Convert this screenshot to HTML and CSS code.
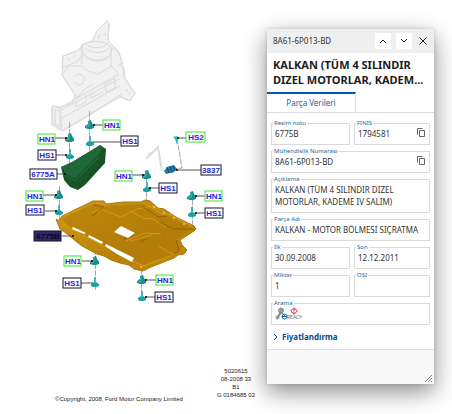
FILE: index.html
```html
<!DOCTYPE html>
<html lang="tr">
<head>
    <meta charset="utf-8">
    <meta name="viewport" content="width=device-width, initial-scale=1">
    <title>KALKAN - MOTOR BÖLMESI SIÇRATMA</title>
    <link rel="stylesheet" href="styles.css">
</head>
<body>
    <main class="viewer">
        <figure class="drawing">
            <svg class="diagram" viewBox="0 0 259 360" role="img" aria-label="6775B">
                <defs>
                    <g id="nut">
                        <path d="M-2 -4L1 -5L2 -2L4 1V3L1 4H-2L-5 3V1L-2 -1Z" fill="#168f8c"/>
                        <path d="M-1 -4V1L-4 2" fill="none" stroke="#4bb8b5"/>
                    </g>
                    <g id="screw">
                        <path d="M-1 -6H1V-1L4 1V3L1 4H-2L-4 3V1L-1 -1Z" fill="#1ba3a1"/>
                        <path d="M0 -6V0" stroke="#66cac7"/>
                    </g>
                    <linearGradient id="gold" x1="0" y1="0" x2="1" y2="1">
                        <stop offset="0" stop-color="#d39a12"/>
                        <stop offset=".6" stop-color="#b98209"/>
                        <stop offset="1" stop-color="#c0880a"/>
                    </linearGradient>
                </defs>

                <!-- engine mount -->
                <g class="mount">
                    <path d="M92 41L97 31L107 21L109 24L108 40L112 45L118 50L123 65L124 78L135 93L130 101L120 97L63 131L52 123V106L60 107L72 103L75 95L62 75L63 56L77 51L83 44Z" fill="#f1f1f2"/>
                    <path d="M92 41L97 31L107 21L109 24L108 40M98 39L100 34M104 36L106 33M82 46C87 40 104 40 110 46C114 52 109 59 98 60C88 61 80 53 82 46V64M111 49V66L118 73M85 48C91 54 103 54 109 48M84 55C91 63 104 63 111 55M86 44C91 49 102 49 107 44M63 56L81 49M63 56L62 68L78 61L82 55M68 58L70 61M74 54V58M62 75L69 66L82 66L88 71L98 74L112 66M62 75L77 98L85 89L93 84M75 76C78 72 85 75 84 80C83 85 77 87 75 82M112 48L119 52L122 63L117 66M119 64L124 68L125 78L135 93L130 101L120 96"/>
                    <path d="M52 106L60 108L119 74M60 108L62 131L122 94M52 106V125L62 131M55 109L60 112V127L55 124ZM61 110L119 79M62 118L120 86M76 101V107L86 102V95M91 93V98L103 92M105 84L115 78V88L106 92ZM126 89L130 94"/>
                </g>

                <!-- assembly guide lines -->
                <path class="guide" d="M69.500 122V163M89.500 111V151M59.500 186V221M146.500 170V203M192.500 192V228M95.500 249V290M141.500 268V301M177 138L182 168L173 169"/>
                <path d="M146 159L158 147L162 171M146 159L151 152" fill="none" stroke="#dcdcdc" stroke-width="2"/>

                <!-- side shield -->
                <path d="M61 167L72 162L100 145L106 149L105 163L85 185L78 190L70 187L64 180Z" fill="#185526"/>
                <path d="M61 167L72 163L99 146L102 148L98 159L75 181L66 177L64 170Z" fill="#20683a"/>
                <path d="M66 175L75 179L101 153M78 188L104 161" fill="none" stroke="#144a23"/>

                <!-- undertray -->
                <path d="M56 219L59 221L62 216L93 201L104 201L106 204L123 202L141 202L145 200L150 201L158 208L164 209L176 217L194 226L196 229L194 231L180 240L182 245L187 250L184 254L178 255L174 258L151 267L143 271L134 269L129 265L120 263L111 260L104 256L97 254L82 246L73 239L66 233L60 229Z" fill="url(#gold)" stroke="#a87608"/>
                <path d="M62 219L94 203L106 206L143 204L192 229L177 239L181 251L143 265L116 253L68 226Z" fill="#ad7808" opacity=".55"/>
                <g fill="none" stroke="#d29a1c">
                    <path d="M61 221L66 226L119 254L143 266L171 256M63 216L94 203L105 205L98 213M92 213L101 209L121 217L137 209L153 206L192 226M145 203L161 214L170 214L186 224M130 211L145 219L151 218L166 227M126 241L145 233L161 234M131 241L152 235M158 246L174 255"/>
                </g>
                <g fill="none" stroke="#916309">
                    <path d="M94 205L104 207L92 216M142 206L158 217L167 216M159 222L174 229L194 229M176 240L179 250L174 254M140 242L148 238M124 239L135 234"/>
                </g>
                <path d="M114 232L121 226L135 233L128 238Z" fill="#fff"/>
                <path d="M73 227L86 233L84 234L72 229ZM89 235L103 242L102 244L88 237ZM106 244L118 250L134 258L132 262L117 254L105 246Z" fill="#fff"/>
                <g fill="#edc95f">
                    <circle cx="154" cy="207" r="1"/>
                    <circle cx="164" cy="213" r="1"/>
                    <circle cx="174" cy="218" r="1"/>
                    <circle cx="184" cy="224" r="1"/>
                    <circle cx="141" cy="267" r="1"/>
                </g>

                <use href="#nut" x="90" y="125"/>
                <use href="#nut" x="70" y="138"/>
                <use href="#nut" x="59" y="195"/>
                <use href="#nut" x="147" y="175"/>
                <use href="#nut" x="192" y="196"/>
                <use href="#nut" x="95" y="261"/>
                <use href="#nut" x="142" y="280"/>
                <use href="#screw" x="90" y="142"/>
                <use href="#screw" x="70" y="155"/>
                <use href="#screw" x="59" y="211"/>
                <use href="#screw" x="147" y="188"/>
                <use href="#screw" x="192" y="213"/>
                <use href="#screw" x="95" y="283"/>
                <use href="#screw" x="142" y="297"/>
                <path d="M173 137L177 136L178 138L177 145L175 139Z" fill="#1fbfc1"/>
                <path d="M164 171L167 167L174 165L177 169L174 172L166 174Z" fill="#237ba7"/>
                <path d="M167 167L169 173M170 166L172 173M173 166L175 171" stroke="#124866"/>

                <path class="leader" d="M93 125H103M55 138H67M42 195H57M132 175H145M195 196H205M82 261H93M145 280H156M178 138H186M92 142H121M56 155H67M57 174H65M45 211H57M62 236H73M149 188H159M177 170H201M195 213H205M81 283H93M145 297H155"/>
                <g>
                    <circle cx="94" cy="125" r="1"/><circle cx="66" cy="138" r="1"/>
                    <circle cx="56" cy="195" r="1"/><circle cx="143" cy="175" r="1"/>
                    <circle cx="196" cy="196" r="1"/><circle cx="92" cy="261" r="1"/>
                    <circle cx="146" cy="280" r="1"/><circle cx="178" cy="138" r="1"/>
                    <circle cx="66" cy="155" r="1"/><circle cx="65" cy="174" r="1"/>
                    <circle cx="56" cy="211" r="1"/><circle cx="73" cy="236" r="1"/>
                    <circle cx="150" cy="188" r="1"/><circle cx="177" cy="170" r="1"/>
                    <circle cx="196" cy="213" r="1"/><circle cx="146" cy="297" r="1"/>
                </g>

                <!-- callouts -->
                <g class="nut-tags">
                    <rect x="103" y="120" width="17" height="10"/>
                    <rect x="38" y="134" width="17" height="10"/>
                    <rect x="26" y="191" width="17" height="10"/>
                    <rect x="115" y="171" width="17" height="10"/>
                    <rect x="205" y="191" width="17" height="10"/>
                    <rect x="64" y="256" width="17" height="10"/>
                    <rect x="156" y="275" width="17" height="10"/>
                    <rect x="186" y="132" width="19" height="10"/>
                </g>
                <g class="part-tags">
                    <rect x="121" y="136" width="17" height="10"/>
                    <rect x="38" y="150" width="18" height="10"/>
                    <rect x="30" y="169" width="27" height="10"/>
                    <rect x="26" y="205" width="18" height="10"/>
                    <rect class="selected" x="34" y="231" width="27" height="10"/>
                    <rect x="159" y="183" width="18" height="10"/>
                    <rect x="201" y="165" width="20" height="10"/>
                    <rect x="205" y="208" width="18" height="10"/>
                    <rect x="63" y="278" width="18" height="10"/>
                    <rect x="155" y="292" width="18" height="10"/>
                </g>
                <g class="tag-text">
                    <text x="112" y="128">HN1</text>
                    <text x="47" y="142">HN1</text>
                    <text x="35" y="199">HN1</text>
                    <text x="124" y="179">HN1</text>
                    <text x="214" y="199">HN1</text>
                    <text x="73" y="264">HN1</text>
                    <text x="165" y="283">HN1</text>
                    <text x="196" y="140">HS2</text>
                    <text x="130" y="144">HS1</text>
                    <text x="47" y="158">HS1</text>
                    <text x="43" y="177">6775A</text>
                    <text x="35" y="213">HS1</text>
                    <text class="selected" x="48" y="239">6775B</text>
                    <text x="168" y="191">HS1</text>
                    <text x="211" y="173">3837</text>
                    <text x="214" y="216">HS1</text>
                    <text x="72" y="286">HS1</text>
                    <text x="164" y="300">HS1</text>
                </g>
            </svg>
            <figcaption class="caption">
                <span class="copyright">©Copyright, 2008, Ford Motor Company Limited</span>
                <span class="codes">5020615<br>08-2008 33<br>B1<br>G 0184685 02</span>
            </figcaption>
        </figure>

        <aside class="panel">
            <header class="panel-bar">
                <span class="part-number">8A61-6P013-BD</span>
                <button class="step" type="button" aria-label="Önceki">
                    <svg width="8" height="8" viewBox="0 0 8 8"><path d="M1 6L4 3L7 6"/></svg>
                </button>
                <button class="step" type="button" aria-label="Sonraki">
                    <svg width="8" height="8" viewBox="0 0 8 8"><path d="M1 2L4 5L7 2"/></svg>
                </button>
                <button class="close" type="button" aria-label="Kapat">
                    <svg width="8" height="8" viewBox="0 0 8 8"><path d="M.5 .5L7.500 7.500M7.500 .5L.5 7.500"/></svg>
                </button>
            </header>
            <h1 class="title">KALKAN (TÜM 4 SILINDIR DIZEL MOTORLAR, KADEM...</h1>
            <nav class="tabs">
                <button class="tab" type="button">Parça Verileri</button>
            </nav>
            <dl class="fields">
                <div class="field">
                    <dt>Resim notu</dt>
                    <dd>6775B</dd>
                </div>
                <div class="field">
                    <dt>FINIS</dt>
                    <dd>1794581</dd>
                    <dd class="action">
                        <button class="copy" type="button" aria-label="Kopyala">
                            <svg width="8" height="9" viewBox="0 0 8 9"><path d="M2.500 2.500H7.500V8.500H2.500ZM.5 6.500V.5H5.500"/></svg>
                        </button>
                    </dd>
                </div>
                <div class="field wide">
                    <dt>Mühendislik Numarası</dt>
                    <dd>8A61-6P013-BD</dd>
                    <dd class="action">
                        <button class="copy" type="button" aria-label="Kopyala">
                            <svg width="8" height="9" viewBox="0 0 8 9"><path d="M2.500 2.500H7.500V8.500H2.500ZM.5 6.500V.5H5.500"/></svg>
                        </button>
                    </dd>
                </div>
                <div class="field wide">
                    <dt>Açıklama</dt>
                    <dd>KALKAN (TÜM 4 SILINDIR DIZEL MOTORLAR, KADEME IV SALIM)</dd>
                </div>
                <div class="field wide">
                    <dt>Parça Adı</dt>
                    <dd>KALKAN - MOTOR BÖLMESI SIÇRATMA</dd>
                </div>
                <div class="field">
                    <dt>İlk</dt>
                    <dd>30.09.2008</dd>
                </div>
                <div class="field">
                    <dt>Son</dt>
                    <dd>12.12.2011</dd>
                </div>
                <div class="field">
                    <dt>Miktar</dt>
                    <dd>1</dd>
                </div>
                <div class="field">
                    <dt>OSI</dt>
                    <dd></dd>
                </div>
                <div class="field wide">
                    <dt>Arama</dt>
                    <dd class="search-icons">
                        <svg width="27" height="14" viewBox="0 0 27 14">
                            <g fill="#aaa" stroke="#858585">
                                <path d="M3 10L6 5" stroke-width="2"/>
                                <circle cx="6" cy="3.500" r="2.500"/>
                                <circle cx="2.500" cy="10.500" r="1.500"/>
                                <path d="M5 4L8 2M6 6L8 7"/>
                            </g>
                            <g fill="none" stroke="#17679c">
                                <circle cx="9.500" cy="9.500" r="2.500"/>
                                <path d="M7 9.500H12M9.500 8V10"/>
                            </g>
                            <path d="M19 .7L22.300 4L19 7.300L15.700 4Z" fill="#fff" stroke="#d91f3e"/>
                            <path d="M19 2V4.500M19 5V6" stroke="#555"/>
                            <text class="reach" x="12" y="12">REACH</text>
                        </svg>
                    </dd>
                </div>
            </dl>
            <details class="pricing">
                <summary>
                    <svg width="5" height="8" viewBox="0 0 5 8"><path d="M1 1L4 4L1 7"/></svg>
                    Fiyatlandırma
                </summary>
            </details>
            <footer class="panel-footer">
                <svg width="7" height="7" viewBox="0 0 7 7"><path d="M0 7L7 0M3 7L7 3M6 7L7 6"/></svg>
            </footer>
        </aside>
    </main>
</body>
</html>
```

FILE: styles.css
```css
* {
    box-sizing: border-box;
}
body {
    margin: 0;
    background-color: #fff;
    color: #333;
    font-family: "Noto Sans", sans-serif;
    font-size: 8px;
    line-height: 12px;
}
button {
    margin: 0;
    padding: 0;
    border: none;
    background: none;
    color: inherit;
    font: inherit;
    cursor: pointer;
}
svg {
    display: block;
}
.viewer {
    display: grid;
    grid-template-columns: minmax(0, 1fr) 167px;
    align-items: start;
    column-gap: 8px;
    min-height: 100vh;
    padding-right: 18px;
    overflow: hidden;
}

/* drawing */
.drawing {
    margin: 0;
    font-family: "Liberation Sans", Arial, sans-serif;
}
.diagram {
    width: 100%;
    height: auto;
}
.mount path {
    stroke: #dadadc;
    stroke-width: 1;
}
.mount path + path {
    fill: none;
}
.guide {
    fill: none;
    stroke: #aaa;
    stroke-dasharray: 6 1;
}
.leader {
    stroke: #555;
}
.nut-tags rect {
    fill: #fff;
    stroke: #38e82c;
}
.part-tags rect {
    fill: #fff;
    stroke: #14142e;
}
.part-tags .selected {
    fill: #30276e;
}
.tag-text {
    fill: #2424e0;
    font-size: 8px;
    font-weight: bold;
    text-anchor: middle;
}
.tag-text .selected {
    fill: #08082a;
}
.caption {
    display: flex;
    justify-content: space-between;
    align-items: flex-end;
    padding: 7px 4px 0 55px;
    color: #222;
    font-size: 6px;
    line-height: 8px;
    white-space: nowrap;
}
.copyright {
    margin-bottom: -4px;
}
.codes {
    text-align: center;
}

/* part panel */
.panel {
    margin-top: 29px;
    background-color: #fff;
    box-shadow: 0 8px 22px rgba(0, 0, 0, .45), 0 0 4px rgba(0, 0, 0, .15);
}
.panel-bar {
    display: flex;
    align-items: center;
    height: 24px;
    padding-right: 3px;
    padding-left: 6px;
    background-color: #efefef;
}
.part-number {
    flex: 1;
}
.panel-bar button {
    display: flex;
    align-items: center;
    justify-content: center;
    width: 16px;
    height: 16px;
}
.panel-bar path {
    fill: none;
    stroke: #222;
}
.panel-bar .step {
    margin-right: 5px;
    background-color: #fff;
}
.panel-bar .step + .close {
    margin-left: -2px;
}
.title {
    margin: 4px 6px 5px;
    color: #1c1c1c;
    font-size: 11px;
    line-height: 15px;
}
.tabs {
    display: flex;
    border-bottom: 1px solid #ddd;
}
.tab {
    width: 89px;
    height: 20px;
    border-top: 2px solid #0057a6;
    border-right: 1px solid #ddd;
    color: #1c6499;
}
.fields {
    display: grid;
    grid-template-columns: 79fr 76fr;
    gap: 6px 4px;
    margin: 0;
    padding: 10px 4px 0;
}
.field {
    position: relative;
    display: flex;
    align-items: center;
    min-height: 22px;
    padding: 4px 4px 4px 3px;
    border: 1px solid #d9d9d9;
}
.wide {
    grid-column: 1 / -1;
}
.field dt {
    position: absolute;
    top: -5px;
    left: 1px;
    padding: 0 1px;
    background-color: #fff;
    color: #1c6499;
    font-size: 6px;
    line-height: 8px;
}
.field dd {
    flex: 1;
    margin: 0;
}
.field .action {
    flex: none;
}
.copy path {
    fill: none;
    stroke: #666;
}
.field .search-icons {
    margin: -1px 0;
}
.reach {
    fill: #666;
    font-size: 5px;
}
.pricing {
    padding: 6px;
    color: #0b4a8c;
    font-weight: bold;
}
.pricing summary {
    display: flex;
    align-items: center;
    gap: 4px;
    list-style: none;
    cursor: pointer;
}
.pricing path {
    fill: none;
    stroke: #0b4a8c;
}
.panel-footer {
    display: flex;
    align-items: flex-end;
    justify-content: flex-end;
    height: 35px;
    padding: 2px;
    border-top: 1px solid #e2e2e2;
    background-color: #f8f8f8;
}
.panel-footer path {
    stroke: #888;
}
```
